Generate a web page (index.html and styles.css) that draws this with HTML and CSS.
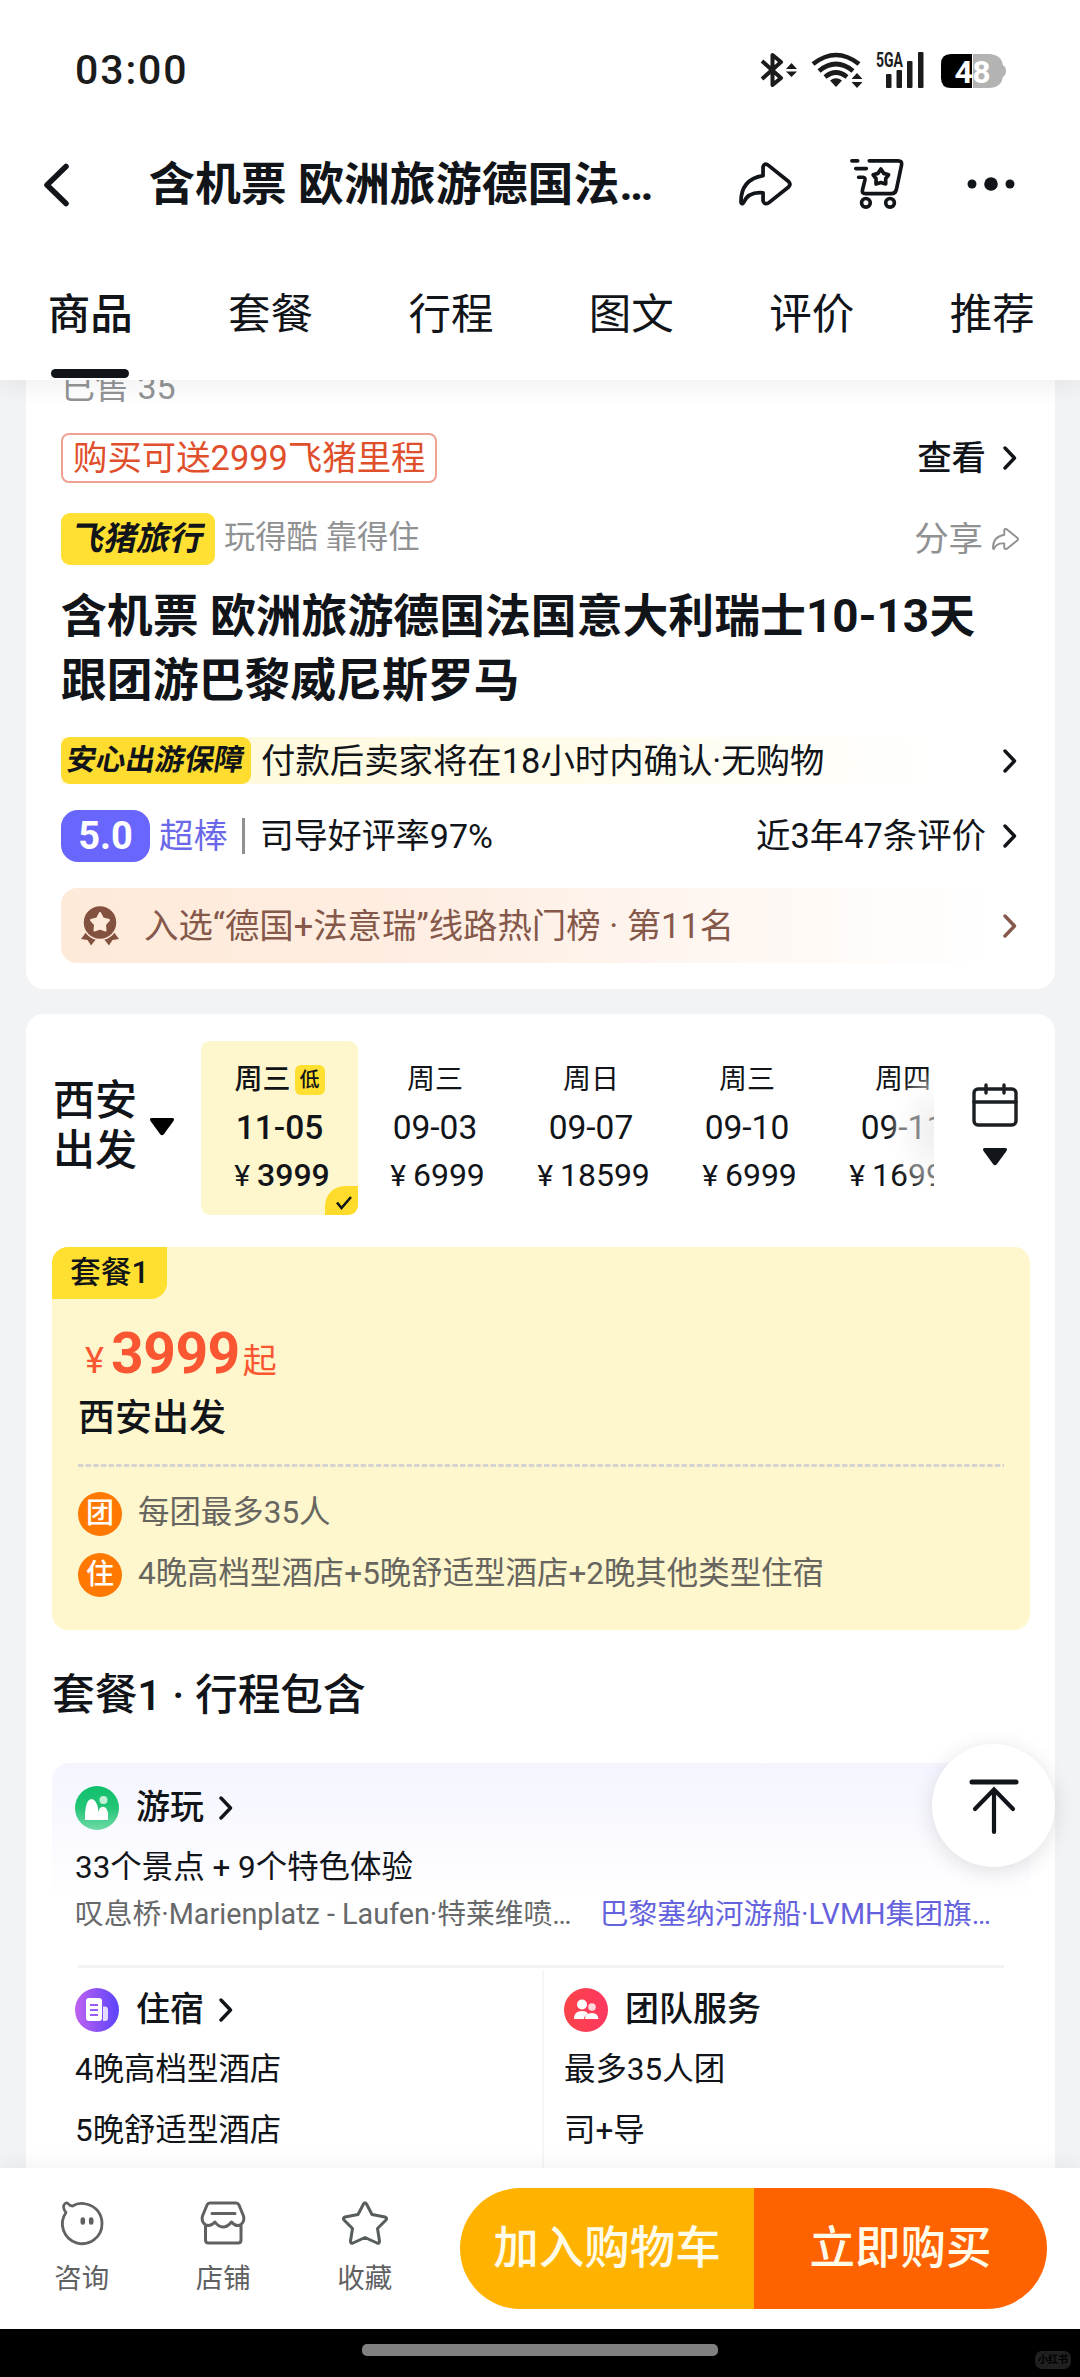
FILE: index.html
```html
<!DOCTYPE html>
<html lang="zh-CN">
<head>
<meta charset="utf-8">
<title>含机票 欧洲旅游德国法国意大利瑞士</title>
<link rel="stylesheet" href="styles.css">
</head>
<body>
<svg class="defs" width="0" height="0" aria-hidden="true">
  <defs>
    <symbol id="chev" viewBox="0 0 14 24"><path d="M2 2 L11.500 12 L2 22" fill="none" stroke="currentColor" stroke-width="3.400" stroke-linecap="round" stroke-linejoin="round"/></symbol>
    <symbol id="share" viewBox="0 0 54 44"><path d="M24.500 4.500C25 1.800 27.500 1 30 3L50.500 19.500C52.500 21.500 52.500 23 50.500 25L30.500 41C28 43 25 42 24.500 39V31C14 30 7.500 34 4.500 41C3.500 43 2 42 2 40C2 25 10 16 24.500 13.500Z" fill="none" stroke="currentColor" stroke-width="3.800" stroke-linejoin="round"/></symbol>
    <symbol id="tri" viewBox="0 0 26 18"><path d="M3 0H23Q26 0 24.500 3L15 16Q13 18.500 11 16L1.500 3Q0 0 3 0Z" fill="currentColor"/></symbol>
    <linearGradient id="gGreen" x1="0" y1="0" x2="0" y2="1"><stop offset="0" stop-color="#0fbf6b"/><stop offset=".5" stop-color="#24c577"/><stop offset="1" stop-color="#6fdaa6"/></linearGradient>
    <linearGradient id="gPurple" x1="0" y1="0" x2="1" y2="0"><stop offset="0" stop-color="#bf62f0"/><stop offset="1" stop-color="#5b43fa"/></linearGradient>
    <linearGradient id="gRed" x1="0" y1="0" x2="1" y2="0"><stop offset="0" stop-color="#fb4348"/><stop offset="1" stop-color="#fe3762"/></linearGradient>
  </defs>
</svg>
<div class="phone">
  <header class="top">
    <div class="status">
      <span class="clock">03:00</span>
      <svg class="status-icons" width="250" height="40" viewBox="0 0 250 40">
        <path d="M2 11L21 28L12.500 35V5L21 12L2 29" fill="none" stroke="#1b1b1b" stroke-width="4" stroke-linejoin="round"/>
        <path d="M31.500 13L37 19H26ZM31.500 27L37 21.500H26Z" fill="#1b1b1b"/>
        <g fill="none" stroke="#1b1b1b" stroke-width="4.600">
          <path d="M53 14Q76-4 99 14"/><path d="M59 21Q76 7 93 21"/><path d="M65 27Q76 18 87 27"/>
        </g>
        <path d="M70 30.500Q76 26 82 30.500L76 37Z" fill="#1b1b1b"/>
        <path d="M97 23L102.500 29H91.500ZM97 38L102.500 32H91.500Z" fill="#1b1b1b"/>
        <g fill="#1b1b1b"><rect x="126" y="24" width="5.500" height="14" rx="1"/><rect x="136.500" y="20" width="5.500" height="18" rx="1"/><rect x="147" y="11" width="5.500" height="27" rx="1"/><rect x="158" y="2" width="5.500" height="36" rx="1"/></g>
        <text x="116" y="17" class="net" textLength="27" lengthAdjust="spacingAndGlyphs">5GA</text>
        <path d="M213 4H228Q243 4 243 18V24Q243 38 228 38H213Z" fill="#b3b3b3"/>
        <path d="M242 15Q246 16 246 21Q246 26 242 27Z" fill="#b3b3b3"/>
        <path d="M212 4H191Q181 4 181 14V28Q181 38 191 38H212Z" fill="#000"/>
        <text x="212.500" y="32.500" class="bat" text-anchor="middle" textLength="36">48</text>
      </svg>
    </div>
    <div class="nav">
      <svg class="back" width="28" height="42" viewBox="0 0 28 42"><path d="M25 3.500L6 22L25 40.500" fill="none" stroke="#111418" stroke-width="5.500" stroke-linecap="round" stroke-linejoin="round"/></svg>
      <h1 class="nav-title">含机票 欧洲旅游德国法…</h1>
      <svg class="nav-share" width="53" height="44"><use href="#share"/></svg>
      <svg class="nav-cart" width="56" height="56" viewBox="0 0 58 56" fill="none" stroke="#111418" stroke-width="3.800" stroke-linecap="round" stroke-linejoin="round">
        <path d="M3 4H9M7 12H18M10 21H14.500Q17 21 16.500 24L14 34Q13 38 17 38H44Q48 38 49 34L54.500 8Q55 4 51 4H21"/>
        <path d="M33 12.500L36 17L41 18.500L38 22.500V28L33 26.500L28 28V22.500L25 18.500L30 17Z"/>
        <circle cx="17.500" cy="47.500" r="4.500"/><circle cx="42.500" cy="47.500" r="4.500"/>
      </svg>
      <svg class="nav-more" width="48" height="16" viewBox="0 0 48 16" fill="#111418"><circle cx="5" cy="8" r="4.500"/><circle cx="24" cy="8" r="6.800"/><circle cx="43" cy="8" r="4.500"/></svg>
    </div>
    <nav class="tabs">
      <span class="tab active">商品</span><span class="tab">套餐</span><span class="tab">行程</span><span class="tab">图文</span><span class="tab">评价</span><span class="tab">推荐</span>
    </nav>
  </header>

  <main class="scroll">
    <section class="card info">
      <div class="sold">已售 35</div>
      <div class="row miles">
        <span class="miles-tag">购买可送2999飞猪里程</span>
        <span class="more">查看<svg width="14" height="24"><use href="#chev"/></svg></span>
      </div>
      <div class="row brand">
        <span class="brand-tag"><i>飞猪旅行</i></span><span class="slogan">玩得酷 靠得住</span>
        <span class="more share">分享<svg width="27" height="24" viewBox="0 0 54 44"><use href="#share"/></svg></span>
      </div>
      <h2 class="title">含机票 欧洲旅游德国法国意大利瑞士10-13天<br>跟团游巴黎威尼斯罗马</h2>
      <div class="row guard">
        <span class="guard-tag"><i>安心出游保障</i></span><span class="guard-text">付款后卖家将在18小时内确认·无购物</span>
        <span class="more"><svg width="14" height="24"><use href="#chev"/></svg></span>
      </div>
      <div class="row rate">
        <span class="score">5.0</span><span class="great">超棒</span><span class="bar"></span><span class="praise">司导好评率97%</span>
        <span class="more">近3年47条评价<svg width="14" height="24"><use href="#chev"/></svg></span>
      </div>
      <div class="row rank">
        <svg class="medal" width="38" height="40" viewBox="0 0 38 40" fill="#83513f">
          <path d="M6 25L0 33L6.500 34L10 39.500L15.500 32.500ZM32 25L38 33L31.500 34L28 39.500L22.500 32.500Z"/>
          <circle cx="19" cy="16.500" r="17" fill="#83513f" stroke="#feeadb" stroke-width="1.500"/>
          <path d="M19 7L22 12.500L28 14L24 18.500L24.500 24.500L19 22.500L13.500 24.500L14 18.500L10 14L16 12.500Z" fill="#feeadb" stroke="#feeadb" stroke-width="2" stroke-linejoin="round"/>
        </svg>
        <span>入选“德国+法意瑞”线路热门榜 · 第11名</span>
        <span class="more"><svg width="14" height="24"><use href="#chev"/></svg></span>
      </div>
    </section>

    <section class="card product">
      <div class="picker">
        <div class="depart"><span>西安<br>出发</span><svg width="26" height="18"><use href="#tri"/></svg></div>
        <div class="dates">
          <div class="date on"><div class="wk">周三<b class="low">低</b></div><div class="dd">11-05</div><div class="pr"><em>¥</em>3999</div>
            <span class="tick"><svg width="18" height="16" viewBox="0 0 18 16"><path d="M2 7.500L6.500 13L16 2" fill="none" stroke="#111418" stroke-width="2.600"/></svg></span></div>
          <div class="date"><div class="wk">周三</div><div class="dd">09-03</div><div class="pr"><em>¥</em>6999</div></div>
          <div class="date"><div class="wk">周日</div><div class="dd">09-07</div><div class="pr"><em>¥</em>18599</div></div>
          <div class="date"><div class="wk">周三</div><div class="dd">09-10</div><div class="pr"><em>¥</em>6999</div></div>
          <div class="date"><div class="wk">周四</div><div class="dd">09-11</div><div class="pr"><em>¥</em>16999</div></div>
          <div class="fade"></div>
        </div>
        <div class="cal">
          <svg width="46" height="44" viewBox="0 0 46 44" fill="none" stroke="#1b1f22" stroke-width="3.400" stroke-linecap="round"><rect x="2" y="6" width="42" height="36" rx="4"/><path d="M2 19H44M14 2V10M32 2V10"/></svg>
          <svg width="26" height="18"><use href="#tri"/></svg>
        </div>
      </div>

      <div class="pkg">
        <span class="pkg-tag">套餐1</span>
        <div class="price"><span class="yen">¥</span><span class="num">3999</span><span class="from">起</span></div>
        <div class="city">西安出发</div>
        <svg class="dash" width="926" height="3"><path d="M0 1.500H926" stroke="#d3d4d2" stroke-width="3" stroke-dasharray="5.400 2.240"/></svg>
        <div class="feat"><span class="dot">团</span>每团最多35人</div>
        <div class="feat"><span class="dot">住</span>4晚高档型酒店+5晚舒适型酒店+2晚其他类型住宿</div>
      </div>

      <h3 class="sub">套餐1 · 行程包含</h3>

      <div class="plan">
        <div class="head">
          <svg width="44" height="44" viewBox="0 0 44 44"><circle cx="22" cy="22" r="22" fill="url(#gGreen)"/><path d="M10 34V27Q11 14 16 13Q21 13 23 22V26L25 22Q31 18 33 27V34Z" fill="#fff"/><circle cx="28.500" cy="14" r="4" fill="#c4f0d8"/></svg>
          <span>游玩</span><svg class="hc" width="14" height="24"><use href="#chev"/></svg>
        </div>
        <div class="line">33个景点 + 9个特色体验</div>
        <div class="spots"><span>叹息桥·Marienplatz - Laufen·特莱维喷…</span><span class="violet">巴黎塞纳河游船·LVMH集团旗…</span></div>
        <div class="cols">
          <div class="col">
            <div class="head">
              <svg width="44" height="44" viewBox="0 0 44 44"><circle cx="22" cy="22" r="22" fill="url(#gPurple)"/><rect x="11" y="10" width="16" height="23" rx="3" fill="#fff"/><path d="M28 18.500H30Q33 18.500 33 22V30Q33 33 30 33H28Z" fill="#e3dcff"/><path d="M15 17H23M15 22H23M15 27H23" stroke="#9a5bf5" stroke-width="2"/></svg>
              <span>住宿</span><svg class="hc" width="14" height="24"><use href="#chev"/></svg>
            </div>
            <div class="line">4晚高档型酒店</div>
            <div class="line">5晚舒适型酒店</div>
          </div>
          <div class="col">
            <div class="head">
              <svg width="44" height="44" viewBox="0 0 44 44"><circle cx="22" cy="22" r="22" fill="url(#gRed)"/><circle cx="18" cy="16.500" r="5" fill="#fff"/><path d="M10 31Q10 23 18 23Q23 23 24 26Q20 28 20 31Z" fill="#fff"/><circle cx="28" cy="19" r="3.800" fill="#ffd9de"/><path d="M21 31Q21 25 28 25Q34 25 34.500 31Z" fill="#fff"/></svg>
              <span>团队服务</span>
            </div>
            <div class="line">最多35人团</div>
            <div class="line">司+导</div>
          </div>
        </div>
      </div>
    </section>
  </main>

  <button class="to-top" aria-label="回到顶部"><svg width="50" height="56" viewBox="0 0 50 56" fill="none" stroke="#111418" stroke-width="4.200" stroke-linecap="round"><path d="M3 4H47" stroke-width="5"/><path d="M25 54V12M6 31L25 11.500L44 31"/></svg></button>

  <footer class="buy">
    <div class="act">
      <svg width="46" height="46" viewBox="0 0 46 46" fill="none" stroke="#5f6163" stroke-width="2.800" stroke-linejoin="round"><path d="M13.500 6C18 3.300 23 3 27 4C37 6 43 14 43 23.500A19.800 19.800 0 1 1 7 12.500Q3.500 8 5 5Q6.500 1.500 9.500 4Q11 6 13.500 6Z"/><path d="M23.800 19.500V22.500M32.200 19.500V22.500" stroke-width="4.600" stroke-linecap="round"/></svg>
      <span>咨询</span>
    </div>
    <div class="act">
      <svg width="46" height="46" viewBox="0 0 46 46" fill="none" stroke="#5f6163" stroke-width="3" stroke-linejoin="round" stroke-linecap="round"><path d="M10 3H36Q38 3 39 5L43.500 16Q45 21 41 24.500Q36 27.500 31.500 22Q27.500 27 23 27Q18.500 27 15 22Q10 27.500 5 24.500Q1 21 2.500 16L7 5Q8 3 10 3ZM12 13.500H35M5.500 25.500V40Q5.500 43 8.500 43H38Q41 43 41 40V25.500"/></svg>
      <span>店铺</span>
    </div>
    <div class="act">
      <svg width="46" height="46" viewBox="0 0 46 46" fill="none" stroke="#565d5b" stroke-width="3" stroke-linejoin="round"><path d="M21.500 4Q23 1.500 24.500 4L30 14.500L43 17Q45.500 18 44 20L35.500 28.500L37.500 41Q37.500 44 35 43L23 37.500L11 43Q8.500 44 8.500 41L10.500 28.500L2 20Q.5 18 3 17L16 14.500Z"/></svg>
      <span>收藏</span>
    </div>
    <div class="btns"><span class="add">加入购物车</span><span class="now">立即购买</span></div>
  </footer>
  <div class="home"><span class="pill"></span><span class="mark">小红书</span></div>
</div>
</body>
</html>
```

FILE: styles.css
```css
* { box-sizing: border-box; margin: 0; padding: 0; }
body {
  width: 1080px;
  background: #fff;
  color: #111418;
  font-family: Roboto, "Noto Sans CJK SC", sans-serif;
  white-space: nowrap;
}
svg { display: block; flex: none; overflow: visible; }
.defs { position: absolute; }
em { font-style: normal; }
.phone { position: relative; width: 1080px; height: 2377px; overflow: hidden; display: flex; flex-direction: column; }

/* header */
.top { position: relative; z-index: 2; height: 380px; flex: none; background: #fff; box-shadow: 0 4px 26px rgba(0, 0, 0, .07); }
.status { display: flex; justify-content: space-between; align-items: flex-start; padding: 50px 76px 0 75px; height: 140px; }
.clock { font-size: 41px; font-weight: 500; line-height: 40px; letter-spacing: 1.9px; color: #1b1b1b; }
.status-icons { margin-right: -6px; }
.net { font: 700 21px Roboto, sans-serif; fill: #1b1b1b; }
.bat { font: 700 32px Roboto, sans-serif; fill: #fff; }
.nav { display: flex; align-items: center; height: 88px; padding: 0 65px 0 41px; }
.nav-title { margin-left: 80px; width: 524px; font-size: 45.900px; font-weight: 700; line-height: 86px; }
.nav-share { margin-left: 66px; }
.nav-cart { margin-left: 57px; }
.nav-more { margin-left: auto; }
.tabs { display: flex; height: 152px; }
.tab { width: 180.400px; flex: none; text-align: center; font-size: 42.500px; line-height: 173px; height: 150px; position: relative; }
.tab.active { font-weight: 500; }
.tab.active::after { content: ""; position: absolute; left: 51px; bottom: 0; width: 78px; height: 9px; border-radius: 5px; background: #111418; }

/* scrolling content */
.scroll { height: 1788px; flex: none; overflow: hidden; background: #f2f3f5; padding: 0 25px 0 26px; }
.card { background: #fff; border-radius: 18px; }
.info { height: 609px; padding: 0 37px 0 35px; border-radius: 0 0 18px 18px; font-size: 34.400px; overflow: hidden; }
.row { display: flex; align-items: center; line-height: 34px; }
.more { margin-left: auto; display: flex; align-items: center; gap: 17px; }
.more svg { margin-right: 1px; }
.sold { margin-top: -13px; padding-left: 0; height: 40px; line-height: 40px; color: #929496; font-size: 34px; }
.miles { margin-top: 26px; height: 50px; }
.miles-tag { height: 50px; line-height: 46px; padding: 0 10px; border: 2.500px solid #f0a292; border-radius: 8px; color: #e04f2c; }
.miles .more { font-weight: 500; }
.brand { margin-top: 30px; height: 52px; }
.brand-tag { width: 154px; height: 52px; line-height: 52px; border-radius: 9px; background: #ffe033; text-align: center; font-weight: 700; font-size: 33px; margin-right: 9px; }
.brand-tag i { font-style: normal; display: inline-block; transform: skewX(-12deg); }
.slogan { font-size: 31.300px; color: #8f9193; position: relative; top: -1px; }
.share { color: #8f9193; gap: 9px; }
.share svg { margin-right: -1px; }
.title { margin-top: 19px; font-size: 45.850px; line-height: 64px; font-weight: 700; }
.guard { margin-top: 25px; height: 47px; background: linear-gradient(90deg, #fff9d5, #fffcec 55%, #fff 92%); }
.guard-tag { width: 190px; height: 47px; line-height: 47px; border-radius: 9px; background: #ffdc30; text-align: center; font-size: 29.500px; font-weight: 700; margin-right: 10px; }
.guard-tag i { font-style: normal; display: inline-block; transform: skewX(-10deg); }
.rate { margin-top: 26px; height: 52px; }
.score { width: 89px; height: 52px; line-height: 53px; border-radius: 17px; background: #6966fe; color: #fff; text-align: center; font-size: 38px; font-weight: 700; margin-right: 9px; }
.great { color: #6c68ea; }
.bar { width: 3px; height: 36px; background: #8e9092; margin: 0 15px 0 14px; }
.praise { font-size: 34px; }
.rank { margin-top: 26px; height: 75px; border-radius: 16px; background: linear-gradient(90deg, #feead9, #feeee3 40%, #fff 97%); color: #85584a; }
.medal { margin: 0 25px 0 20px; }

/* product */
.product { margin-top: 25px; height: 1400px; padding: 27px 25px 0 26px; }
.picker { display: flex; height: 174px; }
.depart { width: 149px; display: flex; align-items: center; font-size: 42px; line-height: 50px; font-weight: 500; padding: 0 0 4px 1px; color: #111418; }
.depart svg { margin: 2px 0 0 12px; color: #000; }
.dates { position: relative; display: flex; width: 733px; overflow: hidden; }
.date { position: relative; flex: none; width: 156px; padding-top: 16px; text-align: center; }
.date.on { background: #fef6cd; border-radius: 9px; font-weight: 500; width: 157px; margin-right: -1px; overflow: hidden; }
.wk { display: flex; justify-content: center; align-items: center; font-size: 28px; line-height: 46px; height: 46px; }
.low { width: 30px; height: 30px; line-height: 30px; border-radius: 6px; background: #ffdf2f; font-size: 20px; font-weight: 500; margin-left: 4px; }
.dd { height: 50px; line-height: 50px; font-size: 33.500px; }
.pr { height: 46px; line-height: 44px; font-size: 32px; padding-left: 5px; }
.pr em { margin-right: 7px; font-size: 30px; font-weight: 400; }
.tick { position: absolute; right: 0; bottom: 0; width: 33px; height: 29px; border-radius: 20px 0 9px 0; background: #ffdc2c; padding: 9px 0 0 10px; }
.fade { position: absolute; right: 0; top: 26px; width: 48px; height: 130px; background: radial-gradient(ellipse 46px 62px at 100% 50%, rgba(228, 228, 228, .6), rgba(250, 250, 250, .45) 75%, rgba(255, 255, 255, 0)); }
.cal { margin-left: 37px; padding-top: 42px; display: flex; flex-direction: column; align-items: center; gap: 21px; width: 48px; }

.pkg { position: relative; margin-top: 32px; height: 383px; border-radius: 16px; background: #fef6cd; padding-left: 26px; overflow: hidden; }
.pkg-tag { display: block; margin-left: -26px; width: 115px; height: 52px; line-height: 51px; padding-left: 18px; border-radius: 0 0 16px 0; background: #ffdf2f; font-size: 30.800px; font-weight: 500; }
.price { display: flex; align-items: baseline; color: #fa5632; margin-top: 22px; padding-left: 7px; height: 66px; line-height: 66px; }
.yen { font-size: 36px; width: 26px; }
.num { font-size: 57px; font-weight: 700; letter-spacing: -.5px; }
.from { font-size: 34px; margin-left: 3px; }
.city { margin-top: 7px; height: 50px; line-height: 50px; font-size: 37px; font-weight: 500; }
.dash { margin-top: 20px; }
.feat { display: flex; align-items: center; height: 44px; line-height: 40px; font-size: 31.450px; color: #666560; margin-top: 17px; padding-bottom: 2px; }
.dash + .feat { margin-top: 25px; }
.dot { width: 44px; height: 44px; line-height: 43px; border-radius: 50%; background: #ff7800; color: #fff; text-align: center; font-size: 28px; font-weight: 500; margin: 2px 16px 0 0; }
.feat .dot { flex: none; }
.sub { margin-top: 35px; height: 60px; line-height: 61px; font-size: 42.700px; font-weight: 500; padding-left: 0; }

.plan { margin-top: 38px; padding: 23px 26px 0 23px; border-radius: 18px 18px 0 0; background: linear-gradient(#f4f5ff, #fff 140px); }
.head { display: flex; align-items: center; height: 44px; line-height: 40px; font-size: 34px; font-weight: 500; }
.head span { margin: 0 0 2px 17px; }
.hc { margin-left: 15px; }
.line { margin-top: 16px; height: 44px; line-height: 44px; font-size: 31.450px; }
.line + .line { margin-top: 17px; }
.spots { display: flex; justify-content: space-between; margin-top: 2px; height: 44px; line-height: 44px; font-size: 28.750px; color: #66686a; padding-right: 13px; }
.violet { color: #6562dd; }
.cols { display: flex; margin: 29px 0 0 3px; border-top: 3px solid #f3f3f4; }
.col { height: 210px; padding-top: 20px; }
.col:first-child { width: 469px; margin-left: -3px; margin-top: 2px; padding-top: 18px; border-right: 2px solid #f6f6f7; }
.col:last-child { padding-left: 20px; }

.to-top { position: absolute; z-index: 3; left: 932px; top: 1744px; width: 123px; height: 123px; border: 0; border-radius: 50%; background: #fff; box-shadow: 0 4px 22px rgba(0, 0, 0, .12); display: flex; align-items: center; justify-content: center; }

/* purchase bar */
.buy { position: relative; z-index: 2; height: 161px; flex: none; background: #fff; box-shadow: 0 -4px 20px rgba(0, 0, 0, .05); display: flex; padding-left: 11px; }
.act { width: 141.500px; display: flex; flex-direction: column; align-items: center; padding-top: 32px; font-size: 27.500px; color: #5f6163; }
.act span { line-height: 40px; margin-top: 13px; }
.btns { display: flex; margin: 20px 0 0 24.500px; width: 587px; height: 121px; border-radius: 61px; overflow: hidden; color: #fffbe9; font-size: 45.500px; font-weight: 500; line-height: 121px; text-align: center; }
.add { width: 294px; background: #ffb300; }
.now { flex: 1; background: #ff6200; }
.home { height: 48px; background: #000; display: flex; justify-content: flex-end; align-items: flex-start; }
.pill { width: 356px; height: 12px; border-radius: 5px; background: #808080; margin: 15px 317px 0 0; }
.mark { width: 36px; height: 18px; margin: 22px 9px 0 0; border-radius: 7px; background: #202020; color: #000; font-size: 10px; font-weight: 700; line-height: 18px; text-align: center; }
```
